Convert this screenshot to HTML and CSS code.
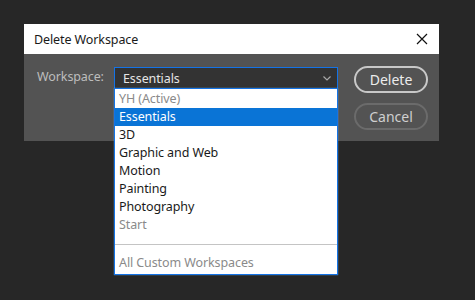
FILE: index.html
```html
<!DOCTYPE html>
<html lang="en">
<head>
    <meta charset="UTF-8">
    <title>Delete Workspace</title>
    <link rel="stylesheet" href="styles.css">
</head>
<body>
    <div class="dialog">
        <div class="titlebar">
            <span class="title">Delete Workspace</span>
            <svg class="close" width="12" height="12" viewBox="0 0 12 12">
                <path d="M1 1 L11 11 M11 1 L1 11" stroke="#111" stroke-width="1.2" fill="none"/>
            </svg>
        </div>
        <div class="content">
            <label class="label">Workspace:</label>
            <div class="select-wrap">
                <div class="select">
                    <span>Essentials</span>
                    <svg class="chevron" width="8" height="5" viewBox="0 0 8 5">
                        <path d="M0.5 0.5 L4 4 L7.5 0.5" stroke="#a8a8a8" stroke-width="1.2" fill="none"/>
                    </svg>
                </div>
                <ul class="menu">
                    <li class="disabled">YH (Active)</li>
                    <li class="selected">Essentials</li>
                    <li>3D</li>
                    <li>Graphic and Web</li>
                    <li>Motion</li>
                    <li>Painting</li>
                    <li>Photography</li>
                    <li class="disabled">Start</li>
                    <li class="separator"></li>
                    <li class="disabled">All Custom Workspaces</li>
                </ul>
            </div>
            <div class="buttons">
                <button class="btn primary">Delete</button>
                <button class="btn">Cancel</button>
            </div>
        </div>
    </div>
</body>
</html>
```

FILE: styles.css
```css
body {
    margin: 0;
    padding: 24px 0 0 24px;
    background-color: #272727;
    font-family: "Noto Sans", "Open Sans", sans-serif;
    font-size: 12.5px;
    letter-spacing: -0.1px;
    height: 300px;
    box-sizing: border-box;
    overflow: hidden;
}
.dialog {
    width: 415px;
    background: #535353;
}
.titlebar {
    height: 30px;
    background: #fff;
    display: flex;
    align-items: center;
    justify-content: space-between;
    padding: 0 11px 0 10px;
}
.title {
    color: #1a1a1a;
}
.content {
    height: 87px;
    display: flex;
    padding: 12px 11px 0 13px;
    box-sizing: border-box;
}
.label {
    color: #bdbdbd;
    width: 77px;
    margin-top: 2px;
}
.select-wrap {
    position: relative;
    width: 224px;
    margin-top: 1px;
}
.select {
    height: 22px;
    background: #333;
    border: 1px solid #1473e6;
    box-sizing: border-box;
    color: #e6e6e6;
    display: flex;
    align-items: center;
    justify-content: space-between;
    padding: 0 6px 0 8px;
}
.menu {
    position: absolute;
    top: 21px;
    left: 0;
    width: 224px;
    box-sizing: border-box;
    margin: 0;
    padding: 1px 0 2px 0;
    list-style: none;
    background: #fff;
    border: 1px solid #1473e6;
    box-shadow: 0 0 1px #5ab0ff;
}
.menu li {
    height: 18px;
    line-height: 18px;
    padding-left: 4px;
    color: #1a1a1a;
}
.menu li.disabled {
    color: #8a8a8a;
}
.menu li.selected {
    background: #0a74d6;
    color: #fff;
}
.menu li.separator {
    height: 1px;
    background: #c4c4c4;
    margin: 10px 0 9px 0;
}
.buttons {
    margin-left: auto;
    display: flex;
    flex-direction: column;
    gap: 10px;
}
.btn {
    width: 74px;
    height: 27px;
    border-radius: 14px;
    background: transparent;
    border: 2px solid #6b6b6b;
    color: #cfcfcf;
    font-family: inherit;
    font-size: 14px;
    padding: 0;
}
.btn.primary {
    border-color: #c8c8c8;
    color: #ececec;
}
```
